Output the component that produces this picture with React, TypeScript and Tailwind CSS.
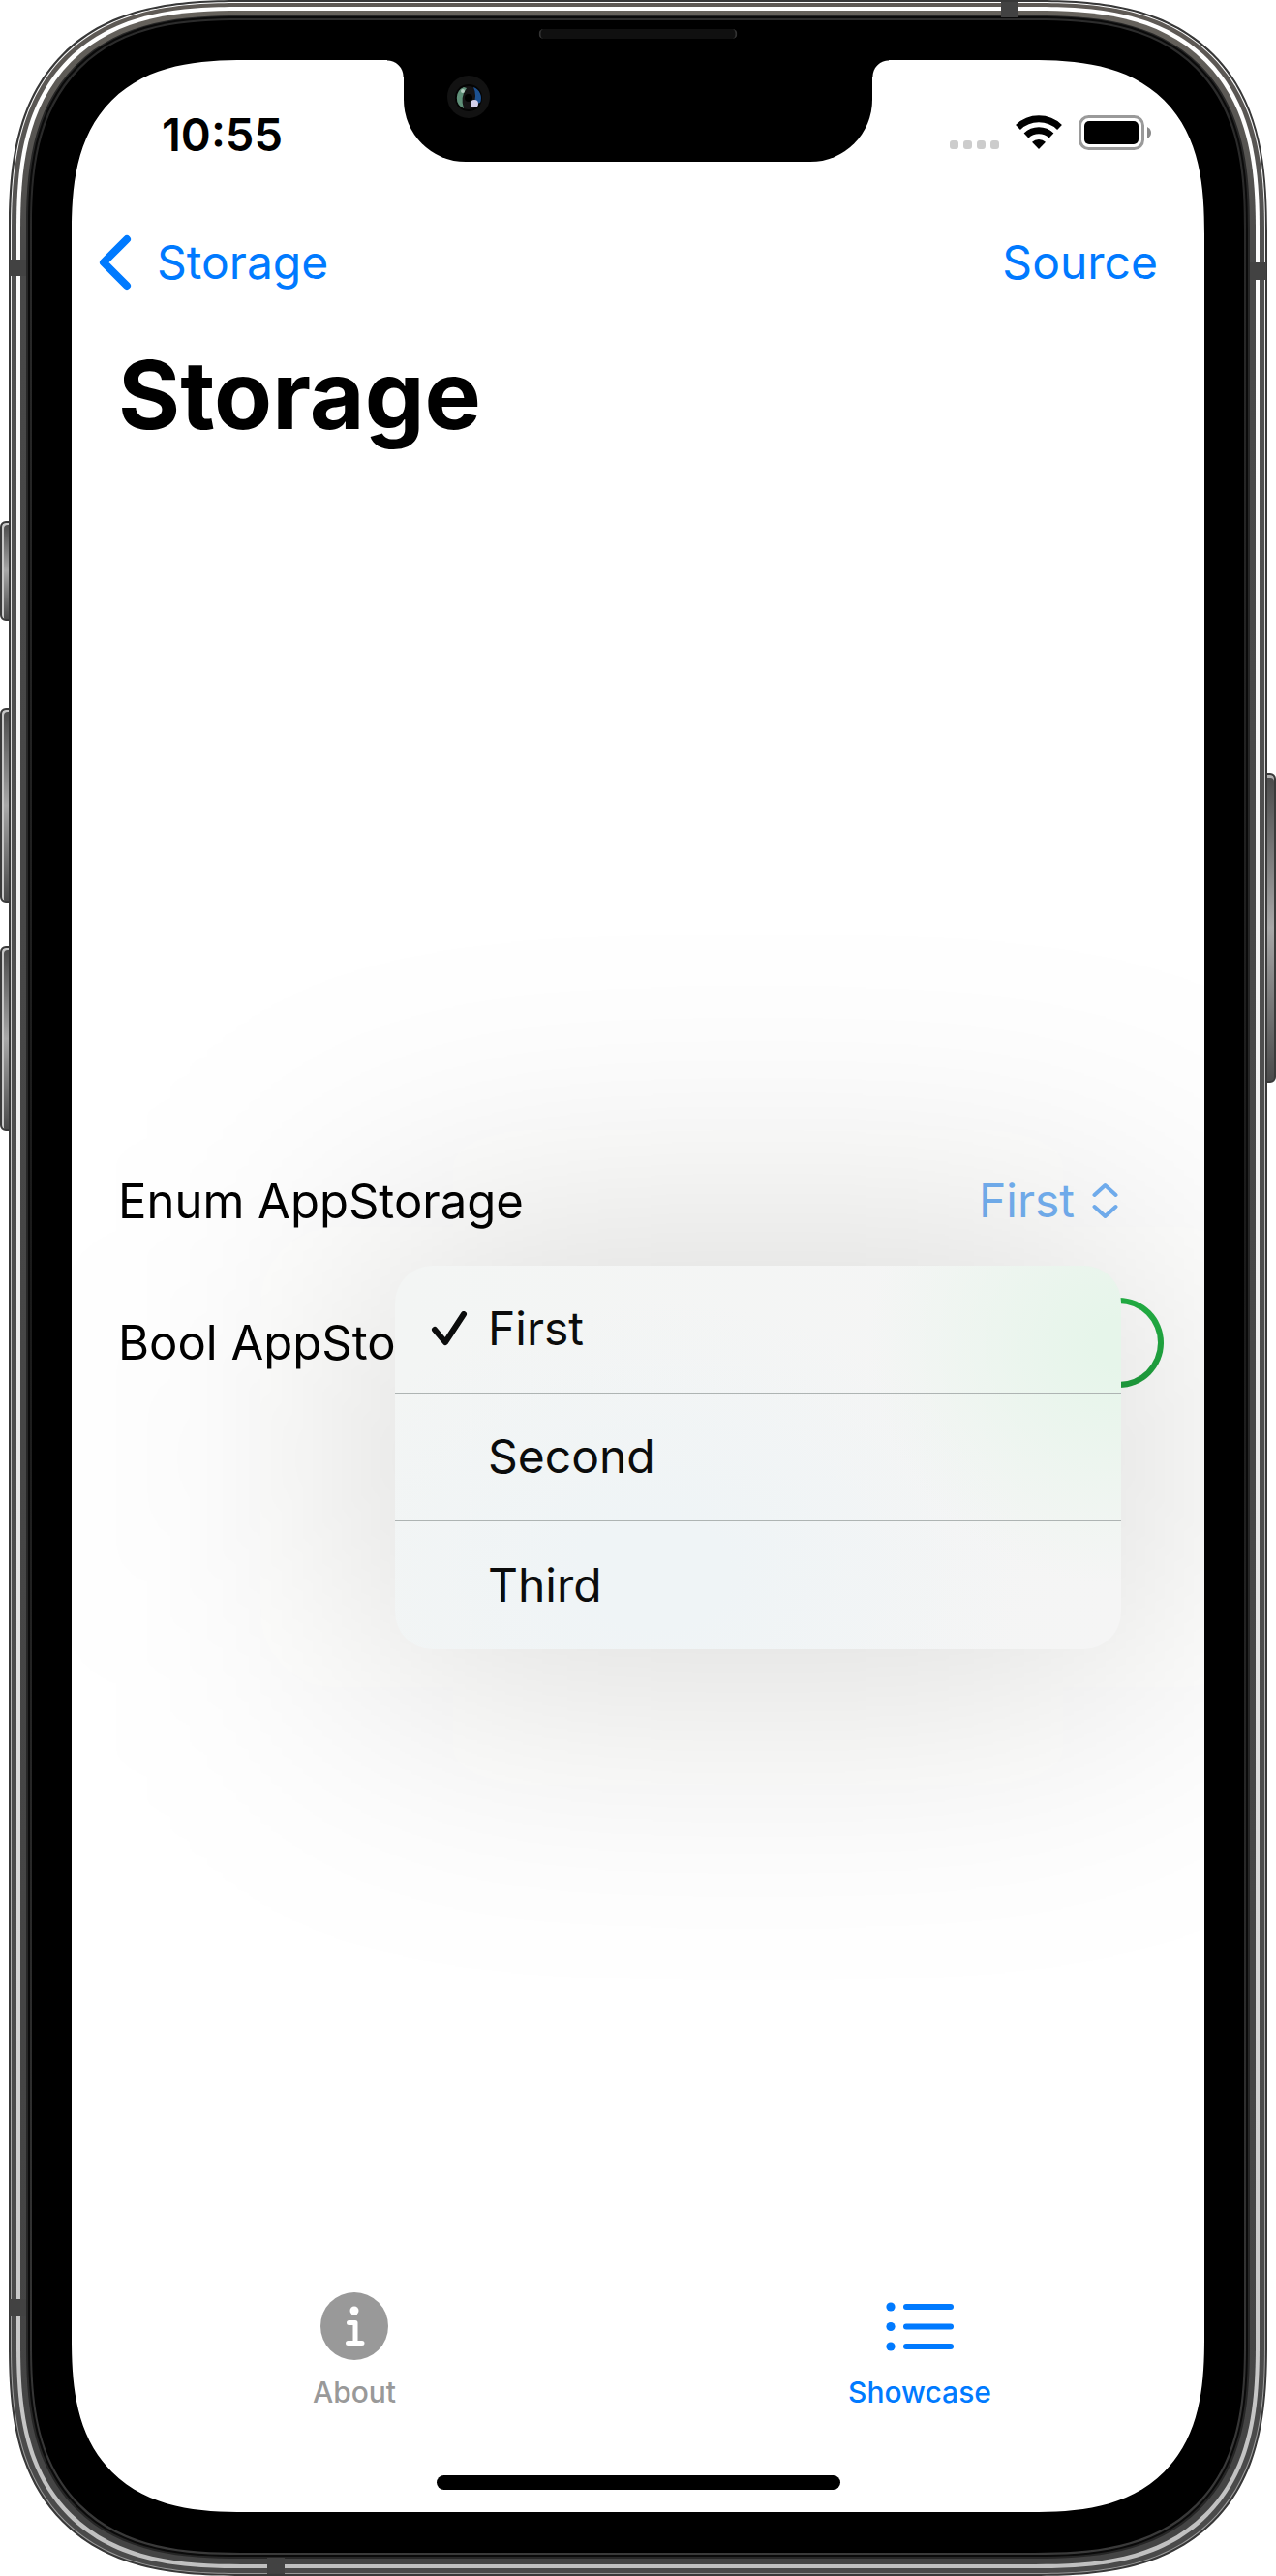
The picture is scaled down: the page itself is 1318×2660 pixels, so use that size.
import { useState } from "react";
import type { ReactNode } from "react";

/* One metal layer of the device edge; layers nest from the outside in. */
function Ring({ className, children }: { className: string; children: ReactNode }) {
  return (
    <div className={`flex flex-1 flex-col [corner-shape:superellipse(1.4)] ${className}`}>
      {children}
    </div>
  );
}

function SideButton({ className }: { className: string }) {
  return (
    <span
      aria-hidden="true"
      className={`absolute border-2 border-[#3a3a3a] bg-linear-to-b from-[#4a4a4a] via-[#a8a8a8] to-[#4a4a4a] ${className}`}
    />
  );
}

function AntennaBand({ className }: { className: string }) {
  return <span aria-hidden="true" className={`absolute bg-[#424242] ${className}`} />;
}

function DeviceFrame({ children }: { children: ReactNode }) {
  return (
    <div className="relative flex min-h-screen flex-col bg-white px-[9px]">
      <SideButton className="left-0 top-[538px] h-[103px] w-3 rounded-l-md shadow-[inset_2px_2px_0_#c8c8c8]" />
      <SideButton className="left-0 top-[731px] h-[201px] w-3 rounded-l-md shadow-[inset_2px_2px_0_#c8c8c8]" />
      <SideButton className="left-0 top-[977px] h-[191px] w-3 rounded-l-md shadow-[inset_2px_2px_0_#c8c8c8]" />
      <SideButton className="right-0 top-[798px] h-[320px] w-3 rounded-r-md shadow-[inset_0_3px_0_#b0b0b0]" />
      <Ring className="relative rounded-[240px] bg-[#383838] p-[2px]">
        <Ring className="rounded-[238px] bg-linear-to-b from-white via-[#bdbdbd] to-[#9a9a9a] p-px">
          <Ring className="rounded-[237px] bg-linear-to-b from-[#5f5a55] via-[#505050] via-10% to-[#4a4a4a] px-[5px] pt-1 pb-[5px]">
            <Ring className="rounded-[232px] bg-linear-to-b from-white via-[#eeeeee] to-[#c0c0c0] p-1">
              <Ring className="rounded-[228px] bg-linear-to-b from-[#66625c] via-[#484848] via-10% to-[#444444] px-[6px] pt-[5px] pb-[6px]">
                <Ring className="rounded-[222px] bg-[#262626] px-[2px] pt-px pb-[2px]">
                  <Ring className="rounded-[220px] bg-[#0a0a0a] px-[2px] pt-[2px] pb-[2px]">
                    <Ring className="rounded-[218px] bg-linear-to-b from-[#2c2c2c] via-[#1a1a1a] to-[#3a3a3a] p-[2px]">
                      <Ring className="rounded-[216px] bg-black px-[41px] pt-[41px] pb-[42px]">
                        {children}
                      </Ring>
                    </Ring>
                  </Ring>
                </Ring>
              </Ring>
            </Ring>
          </Ring>
        </Ring>
        <AntennaBand className="left-px top-[268px] h-[17px] w-[17px]" />
        <AntennaBand className="right-px top-[271px] h-[18px] w-[17px]" />
        <AntennaBand className="right-[257px] top-[2px] h-[16px] w-[18px]" />
        <AntennaBand className="bottom-[268px] left-px h-[18px] w-[17px]" />
        <AntennaBand className="bottom-[2px] left-[267px] h-[17px] w-[18px]" />
        <span
          aria-hidden="true"
          className="absolute left-1/2 top-[30px] h-[10px] w-[205px] -translate-x-1/2 rounded-full border-x-2 border-[#333333] bg-[#101010]"
        />
      </Ring>
    </div>
  );
}

function Notch() {
  return (
    <div aria-hidden="true" className="absolute left-1/2 top-0 flex -translate-x-1/2">
      <span className="size-[17px] bg-[radial-gradient(circle_at_0%_100%,transparent_16px,#000_17px)]" />
      <div className="h-[105px] w-[484px] rounded-b-[64px] bg-black pl-[45px] pt-4">
        <svg viewBox="0 0 44 44" className="size-11">
          <circle cx="22" cy="22" r="22" fill="#121212" />
          <circle cx="22" cy="23" r="14" fill="#040404" />
          <circle cx="22" cy="23" r="12" fill="#151315" />
          <path d="M17 12 A12 12 0 0 0 17 34 Q13 22 20 13 Z" fill="#5f8f78" />
          <path d="M27 12 A12 12 0 0 1 34 28 L27 30 Q31 20 27 12 Z" fill="#1c5192" />
          <circle cx="22" cy="23" r="4" fill="#000" />
          <circle cx="16" cy="16" r="2" fill="#b5cfc2" />
          <circle cx="28" cy="29" r="4" fill="#d3d0ea" />
        </svg>
      </div>
      <span className="size-[17px] bg-[radial-gradient(circle_at_100%_100%,transparent_16px,#000_17px)]" />
    </div>
  );
}

function StatusBar() {
  return (
    <div className="flex h-[152px] items-center justify-between pl-[93px] pr-[54px]">
      <time className="text-[47px] font-semibold leading-none">10:55</time>
      <svg viewBox="0 0 210 38" className="h-[38px] w-[210px]" aria-label="Wi-Fi on, battery full" role="img">
        <g fill="#cccccc">
          <rect x="1" y="26" width="9" height="9" rx="3" />
          <rect x="15" y="26" width="9" height="9" rx="3" />
          <rect x="29" y="26" width="9" height="9" rx="3" />
          <rect x="43" y="26" width="9" height="9" rx="3" />
        </g>
        <g fill="none" stroke="#000" strokeWidth="7">
          <path d="M71.500 12.500 A31 31 0 0 1 114.500 12.500" />
          <path d="M80 21 A19 19 0 0 1 106 21" />
        </g>
        <path d="M93 35 L86 27.800 A10 10 0 0 1 100 27.800 Z" fill="#000" />
        <rect x="135.500" y="1.500" width="65" height="33" rx="9" fill="none" stroke="#9a9a9a" strokeWidth="3" />
        <rect x="140" y="6" width="56" height="24" rx="5" fill="#000" />
        <path d="M205 12 Q209 14 209 18 Q209 22 205 24 Z" fill="#8a8a8a" />
      </svg>
    </div>
  );
}

const OPTIONS = ["First", "Second", "Third"];

export default function App() {
  const [value, setValue] = useState("First");
  const [enabled, setEnabled] = useState(true);

  return (
    <DeviceFrame>
      <div className="relative flex flex-1 flex-col overflow-hidden rounded-[180px] bg-white font-['Inter',sans-serif] text-black [corner-shape:superellipse(1.4)]">
        <Notch />
        <StatusBar />
        <nav className="flex h-[114px] items-center justify-between pl-7 pr-12 text-[48px] leading-none text-[#007aff]">
          <a href="#storage" className="flex items-center gap-[26px]">
            <svg viewBox="0 0 34 58" className="h-[58px] w-[34px]" fill="none" stroke="currentColor" strokeWidth="8" strokeLinecap="round" strokeLinejoin="round" aria-hidden="true">
              <path d="M29 5 L5 29 L29 53" />
            </svg>
            Storage
          </a>
          <a href="#source">Source</a>
        </nav>
        <h1 className="px-12 pt-5 text-[98px] font-bold leading-[120px]">Storage</h1>

        <main className="relative flex flex-1 flex-col justify-center gap-[53px] pb-[209px] text-[49px] leading-none">
          <div className="relative flex h-[93px] items-center justify-between pl-12 pr-[86px]">
            <span>Enum AppStorage</span>
            <button type="button" aria-haspopup="menu" aria-expanded="true" className="flex items-center gap-[18px] pr-[3px] text-[48px] text-[#74b2f5]">
              {value}
              <svg viewBox="0 0 27 38" className="h-[38px] w-[27px]" fill="none" stroke="currentColor" strokeWidth="4" strokeLinecap="round" strokeLinejoin="round" aria-hidden="true">
                <path d="M2.500 13 L13.500 3 L24.500 13 M2.500 25 L13.500 35 L24.500 25" />
              </svg>
            </button>
            <div className="absolute right-[86px] top-[113px] z-10 w-[750px] text-[48px]">
              <span aria-hidden="true" className="absolute -inset-10 rounded-[78px] bg-[#100c00]/15 blur-[150px]" />
              <div
                role="menu"
                aria-label="Enum AppStorage"
                className="relative flex flex-col divide-y divide-[#aeb4b3] overflow-hidden rounded-[38px] bg-[#f5f5f5] bg-[radial-gradient(ellipse_260px_250px_at_100%_20%,#e6f5ea_10%,#e6f5ea00),radial-gradient(ellipse_380px_280px_at_36%_80%,#eff4f6_20%,#eff4f600),linear-gradient(90deg,#f3f5f4,#f5f5f5)] text-[#0b0c0c]"
              >
                {OPTIONS.map((option) => (
                  <button
                    key={option}
                    type="button"
                    role="menuitemradio"
                    aria-checked={option === value}
                    onClick={() => setValue(option)}
                    className="flex h-[132px] items-center gap-[21px] pl-[37px]"
                  >
                    <svg viewBox="0 0 38 36" className="h-9 w-[38px]" fill="none" stroke="currentColor" strokeWidth="6" strokeLinecap="round" strokeLinejoin="round" aria-hidden="true">
                      {option === value && <path d="M4 19 L15 32 L34 3" />}
                    </svg>
                    {option}
                  </button>
                ))}
              </div>
            </div>
          </div>
          <label className="flex h-[93px] items-center justify-between pl-12 pr-[42px]">
            Bool AppStorage
            <span className="flex">
              <input
                type="checkbox"
                role="switch"
                checked={enabled}
                onChange={(event) => setEnabled(event.target.checked)}
                className="peer sr-only"
              />
              <span className="flex h-[93px] w-[153px] justify-start rounded-full bg-gray-200 p-[6px] peer-checked:justify-end peer-checked:bg-linear-to-b peer-checked:from-[#22b446] peer-checked:to-[#1e9f3e]">
                <span className="size-[81px] rounded-full bg-white" />
              </span>
            </span>
          </label>
        </main>

        <footer>
          <nav className="grid grid-cols-2 pr-[2px] text-[30px] font-medium leading-[34px]">
            <a href="#about" className="flex flex-col items-center gap-4 text-[#999999]">
              <svg viewBox="0 0 70 70" className="size-[70px]" aria-hidden="true">
                <circle cx="35" cy="35" r="35" fill="currentColor" />
                <circle cx="35" cy="19" r="4.500" fill="#fff" />
                <path d="M29.500 31.500 H36 V52 M28.500 52.500 H43" fill="none" stroke="#fff" strokeWidth="5" strokeLinecap="round" strokeLinejoin="round" />
              </svg>
              About
            </a>
            <a href="#showcase" aria-current="page" className="flex flex-col items-center gap-4 text-[#007aff]">
              <svg viewBox="0 0 70 70" className="size-[70px]" fill="currentColor" aria-hidden="true">
                <circle cx="5" cy="15" r="4.600" />
                <circle cx="5" cy="35.500" r="4.600" />
                <circle cx="5" cy="56" r="4.600" />
                <rect x="18" y="12" width="52" height="6" rx="3" />
                <rect x="18" y="32.500" width="52" height="6" rx="3" />
                <rect x="18" y="53" width="52" height="6" rx="3" />
              </svg>
              Showcase
            </a>
          </nav>
          <div className="mx-auto mb-[23px] mt-[69px] h-[15px] w-[417px] rounded-full bg-black" />
        </footer>
      </div>
    </DeviceFrame>
  );
}
